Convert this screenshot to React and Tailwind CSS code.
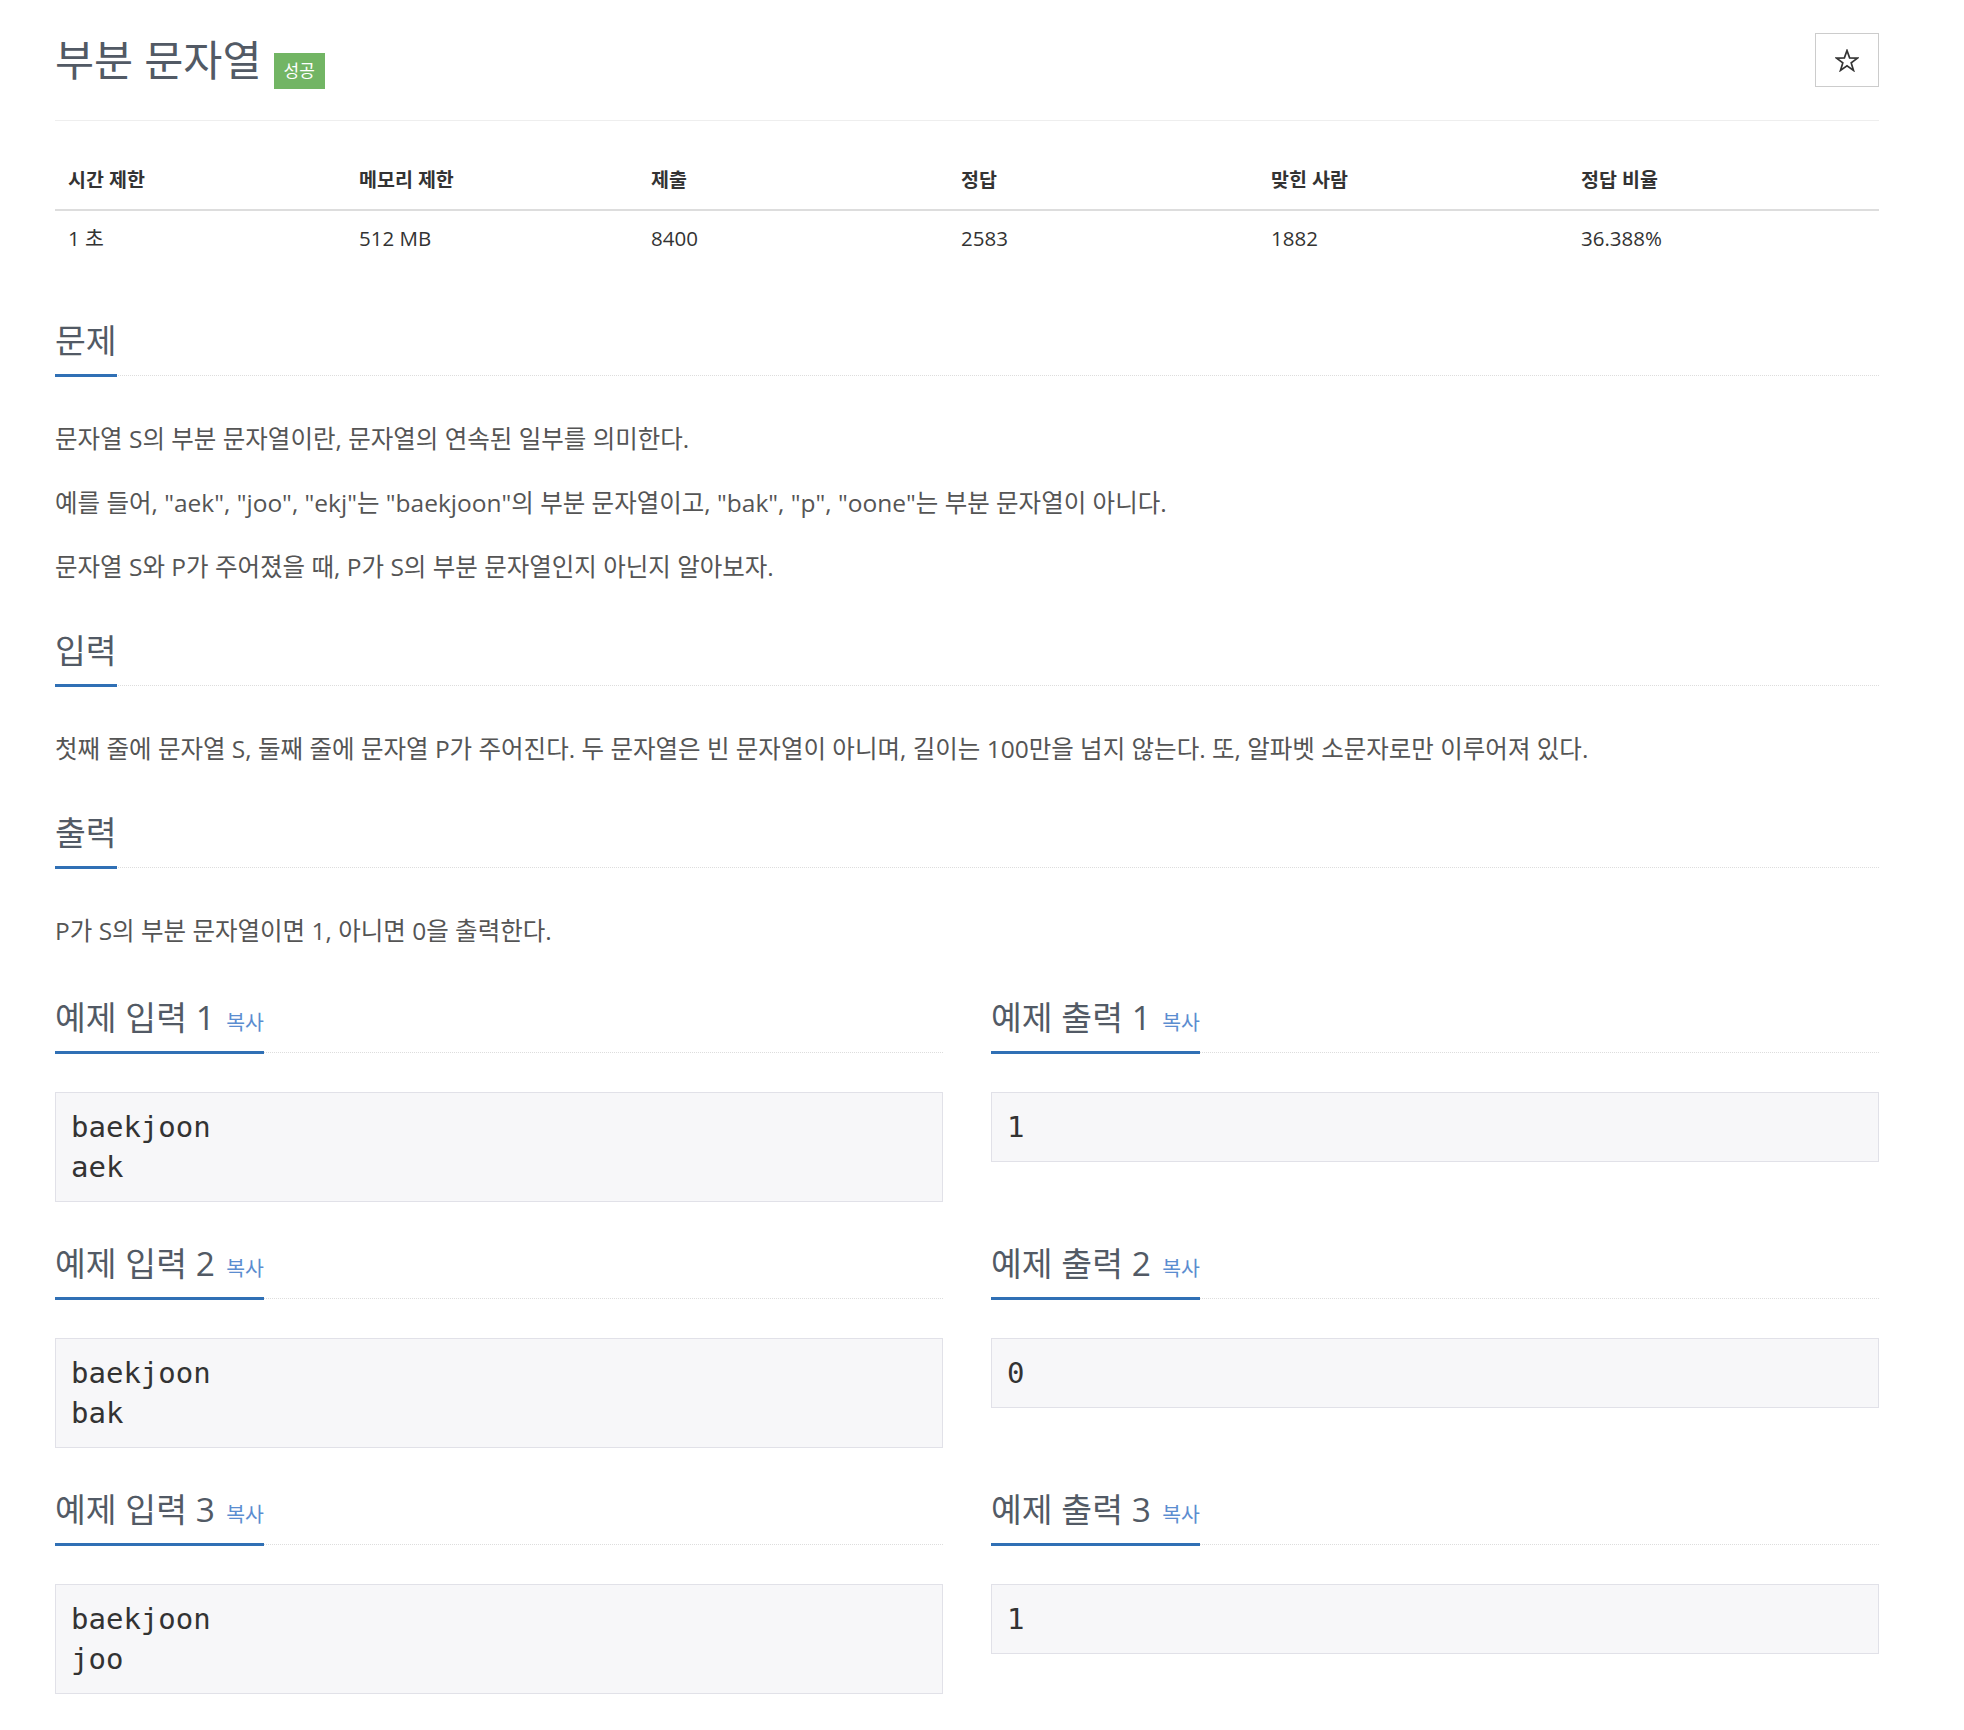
import React from 'react'

const problem = [
    '문자열 S의 부분 문자열이란, 문자열의 연속된 일부를 의미한다.',
    '예를 들어, "aek", "joo", "ekj"는 "baekjoon"의 부분 문자열이고, "bak", "p", "oone"는 부분 문자열이 아니다.',
    '문자열 S와 P가 주어졌을 때, P가 S의 부분 문자열인지 아닌지 알아보자.',
]

const stats = [
    ['시간 제한', '1 초'],
    ['메모리 제한', '512 MB'],
    ['제출', '8400'],
    ['정답', '2583'],
    ['맞힌 사람', '1882'],
    ['정답 비율', '36.388%'],
]

const samples = [
    { input: 'baekjoon\naek', output: '1' },
    { input: 'baekjoon\nbak', output: '0' },
    { input: 'baekjoon\njoo', output: '1' },
]

function Headline({ children, copy }) {
    return (
        <div className="flex border-b border-dotted border-[#ddd]">
            <h2 className="-mb-[2px] pb-[14px] border-b-[3px] border-[#3070b5] text-[33.5px] leading-[40px] text-[#525a65]">
                {children}
                {copy && <span className="ml-[6px] text-[20.5px] leading-none text-[#5b8dd0]"> 복사</span>}
            </h2>
        </div>
    )
}

function Sample({ title, text }) {
    return (
        <div>
            <Headline copy>{title}</Headline>
            <pre className="mt-[39px] px-[15px] py-[14px] border border-[#e1e1e8] bg-[#f7f7f9] text-[#333] text-[29px] leading-[40px] font-['DejaVu_Sans_Mono',monospace] whitespace-pre">
                {text}
            </pre>
        </div>
    )
}

export default function App() {
    return (
        <div className="min-h-[1730px] bg-white pl-[55px] pr-[85px] pb-[36px] font-['Open_Sans','Noto_Sans_CJK_KR',sans-serif]">
            {/* Title */}
            <div className="flex items-start justify-between pt-[33px] pb-[33px] border-b border-[#eee]">
                <div className="flex items-start">
                    <h1 className="text-[42.5px] leading-[54px] text-[#525a65]">부분 문자열</h1>
                    <span className="ml-[12px] mt-[20px] -mb-[2px] h-[36px] px-[10px] flex items-center bg-[#72b564] text-white text-[17px]">성공</span>
                </div>
                <button className="w-[64px] h-[54px] border border-[#ccc] flex items-center justify-center bg-white">
                    <svg width="24" height="23" viewBox="0 0 24 23" fill="none" stroke="#333" strokeWidth="1.7" strokeLinejoin="miter">
                        <polygon points="12,1.5 14.6,8.9 22.5,9.1 16.2,13.9 18.5,21.4 12,16.9 5.5,21.4 7.8,13.9 1.5,9.1 9.4,8.9" />
                    </svg>
                </button>
            </div>

            {/* Stats table */}
            <div className="grid grid-cols-[291px_292px_310px_310px_310px_1fr] text-[#333]">
                {stats.map(([h]) => (
                    <div key={h} className="pl-[13px] pt-[45px] pb-[15px] leading-[28px] text-[19.5px] font-bold border-b-2 border-[#ddd]">{h}</div>
                ))}
                {stats.map(([h, v]) => (
                    <div key={h + v} className="pl-[13px] py-[13px] leading-[28px] text-[20.5px]">{v}</div>
                ))}
            </div>

            {/* 문제 */}
            <section className="mt-[55px]">
                <Headline>문제</Headline>
                <div className="mt-[45px] flex flex-col gap-[28px] text-[24.5px] leading-[36px] text-[#555]">
                    {problem.map((p) => <p key={p}>{p}</p>)}
                </div>
            </section>

            {/* 입력 */}
            <section className="mt-[45px]">
                <Headline>입력</Headline>
                <p className="mt-[45px] text-[24.5px] leading-[36px] text-[#555]">
                    첫째 줄에 문자열 S, 둘째 줄에 문자열 P가 주어진다. 두 문자열은 빈 문자열이 아니며, 길이는 100만을 넘지 않는다. 또, 알파벳 소문자로만 이루어져 있다.
                </p>
            </section>

            {/* 출력 */}
            <section className="mt-[45px]">
                <Headline>출력</Headline>
                <p className="mt-[45px] text-[24.5px] leading-[36px] text-[#555]">
                    P가 S의 부분 문자열이면 1, 아니면 0을 출력한다.
                </p>
            </section>

            {/* 예제 */}
            <div className="mt-[48px] flex flex-col gap-[41px]">
                {samples.map((s, i) => (
                    <div key={i} className="grid grid-cols-2 gap-x-[48px] items-start">
                        <Sample title={`예제 입력 ${i + 1}`} text={s.input} />
                        <Sample title={`예제 출력 ${i + 1}`} text={s.output} />
                    </div>
                ))}
            </div>
        </div>
    )
}
